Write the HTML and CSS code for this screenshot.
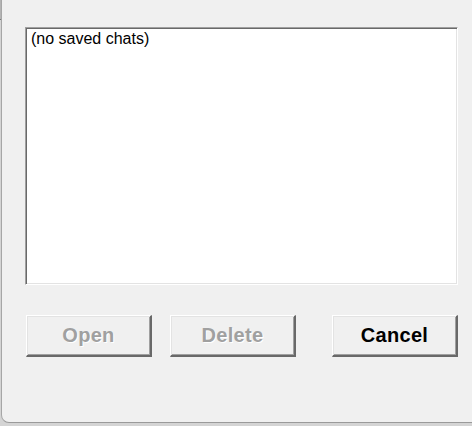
FILE: index.html
```html
<!DOCTYPE html>
<html>
<head>
<meta charset="utf-8">
<title>Saved chats</title>
<link rel="stylesheet" href="styles.css">
</head>
<body>
<div class="window">
  <div class="listbox">
    <div class="item">(no saved chats)</div>
  </div>
  <div class="buttons">
    <button class="btn" disabled>Open</button>
    <button class="btn" disabled>Delete</button>
    <button class="btn btn-cancel">Cancel</button>
  </div>
</div>
</body>
</html>
```
FILE: styles.css
```css
html, body {
  margin: 0;
  padding: 0;
}
body {
  width: 472px;
  height: 426px;
  overflow: hidden;
  background: linear-gradient(to bottom, #b4b4b4 0, #b4b4b4 19px, #7a7a7a 19px, #7a7a7a 20px, #d4d4d4 20px);
}
.window {
  box-sizing: border-box;
  width: 472px;
  height: 423px;
  margin-left: 1px;
  background: #f0f0f0;
  border-left: 1px solid #a6a6a6;
  border-bottom: 1px solid #9a9a9a;
  border-bottom-left-radius: 8px;
  padding: 27px 0 0 23px;
  font-family: "Liberation Sans", Arial, sans-serif;
}
.listbox {
  box-sizing: border-box;
  width: 433px;
  height: 258px;
  background: #fff;
  border: 1px solid;
  border-color: #a0a0a0 #ffffff #ffffff #a0a0a0;
  box-shadow: inset 1px 1px 0 #696969, inset -1px -1px 0 #e3e3e3;
  padding: 2px 5px;
}
.item {
  font-size: 16px;
  line-height: 18px;
  color: #000;
}
.buttons {
  display: flex;
  margin-top: 30px;
  margin-left: 1px;
}
.btn {
  box-sizing: border-box;
  width: 126px;
  height: 42px;
  margin: 0 18px 0 0;
  padding: 0;
  background: #f0f0f0;
  border: 1px solid;
  border-color: #ffffff #696969 #696969 #ffffff;
  border-right-width: 2px;
  border-bottom-width: 2px;
  box-shadow: inset 1px 1px 0 #e3e3e3, inset -1px -1px 0 #a0a0a0;
  font-family: "Liberation Sans", Arial, sans-serif;
  font-weight: bold;
  font-size: 20px;
  color: #000;
  letter-spacing: 0.3px;
}
.btn:disabled {
  color: #a0a0a0;
  text-shadow: 1px 1px 0 #ffffff;
}
.btn-cancel {
  margin-left: 18px;
  margin-right: 0;
}
```
